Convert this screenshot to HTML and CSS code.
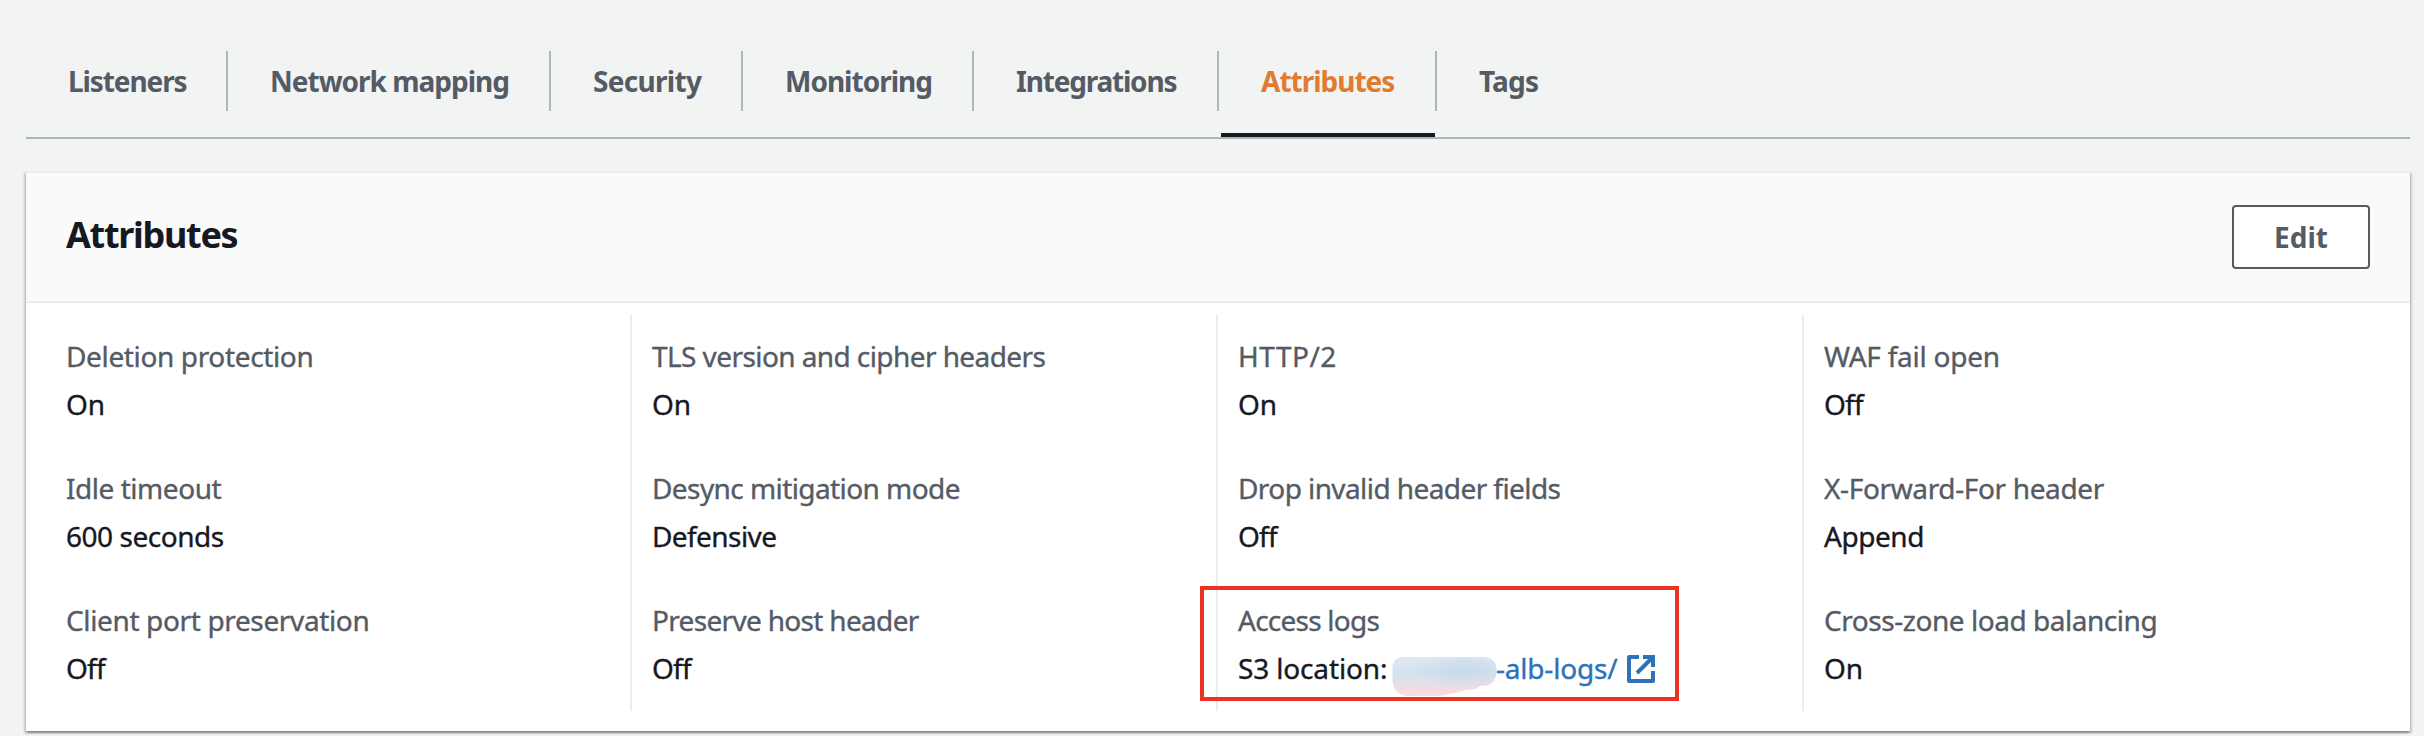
FILE: index.html
```html
<!DOCTYPE html>
<html lang="en">
<head>
<meta charset="utf-8">
<title>Load balancer attributes</title>
<link rel="stylesheet" href="styles.css">
</head>
<body>
<nav class="tabs">
  <a class="tab tab-listeners">Listeners</a>
  <a class="tab tab-network">Network mapping</a>
  <a class="tab tab-security">Security</a>
  <a class="tab tab-monitoring">Monitoring</a>
  <a class="tab tab-integrations">Integrations</a>
  <a class="tab tab-attributes active">Attributes</a>
  <a class="tab tab-tags">Tags</a>
</nav>
<section class="card">
  <header class="card-header">
    <h2 class="card-title">Attributes</h2>
    <button class="button">Edit</button>
  </header>
  <div class="columns">
    <div class="column">
      <div class="field"><div class="label track-3">Deletion protection</div><div class="value">On</div></div>
      <div class="field"><div class="label track-4">Idle timeout</div><div class="value track-4">600 seconds</div></div>
      <div class="field"><div class="label track-3">Client port preservation</div><div class="value track-7">Off</div></div>
    </div>
    <div class="column">
      <div class="field"><div class="label track-5">TLS version and cipher headers</div><div class="value">On</div></div>
      <div class="field"><div class="label track-5">Desync mitigation mode</div><div class="value track-5">Defensive</div></div>
      <div class="field"><div class="label track-6">Preserve host header</div><div class="value track-7">Off</div></div>
    </div>
    <div class="column">
      <div class="field"><div class="label track-wide">HTTP/2</div><div class="value">On</div></div>
      <div class="field"><div class="label track-5">Drop invalid header fields</div><div class="value track-7">Off</div></div>
      <div class="field highlighted">
        <div class="label track-7">Access logs</div>
        <div class="value location">
          <span class="location-name">S3 location:</span>
          <svg class="smudge" viewBox="0 0 105 39">
            <defs>
              <linearGradient id="wash" x1="0" y1="0" x2="0.1" y2="1">
                <stop offset="0" stop-color="#dfe9f2"/>
                <stop offset="0.45" stop-color="#d3e1ee"/>
                <stop offset="0.66" stop-color="#e2e0ea"/>
                <stop offset="0.86" stop-color="#f4dbe0"/>
                <stop offset="1" stop-color="#f8dde0"/>
              </linearGradient>
              <radialGradient id="tint" cx="0.68" cy="0.36" r="0.46">
                <stop offset="0" stop-color="#c8daec"/>
                <stop offset="1" stop-color="#c8daec" stop-opacity="0"/>
              </radialGradient>
            </defs>
            <path fill="url(#wash)" d="M9 0H94Q104.500 2 104.500 14Q104.500 25 96 28.500H90Q87 29 84 32Q79 33 74 33Q64 36 50 38.500Q47 39 42 39H14Q2 37 .5 24V9Q2 1 9 0Z"/>
            <path fill="url(#tint)" d="M9 0H94Q104.500 2 104.500 14Q104.500 25 96 28.500H90Q87 29 84 32Q79 33 74 33Q64 36 50 38.500Q47 39 42 39H14Q2 37 .5 24V9Q2 1 9 0Z"/>
          </svg>
          <a class="link">-alb-logs/</a>
          <svg class="external" viewBox="0 0 28 28" fill="none" stroke="currentColor" stroke-width="4">
            <path stroke-linejoin="round" d="M12 2H2V26H26V16"/>
            <path d="M16 2H26V12M10 18L26 2"/>
          </svg>
        </div>
      </div>
    </div>
    <div class="column">
      <div class="field"><div class="label track-2">WAF fail open</div><div class="value track-7">Off</div></div>
      <div class="field"><div class="label track-3">X-Forward-For header</div><div class="value track-4">Append</div></div>
      <div class="field"><div class="label track-4">Cross-zone load balancing</div><div class="value">On</div></div>
    </div>
  </div>
</section>
</body>
</html>
```
FILE: styles.css
```css
*, *::before, *::after { box-sizing: border-box; }

body {
  margin: 0;
  height: 736px;
  overflow: hidden;
  padding: 51px 14px 0 26px;
  background: #f2f3f3;
  color: #16191f;
  font: 28px/44px "Noto Sans", "Open Sans", sans-serif;
}

/* Tabs */
.tabs {
  display: flex;
  height: 88px;
  border-bottom: 2px solid #aab7b8;
}
.tab {
  position: relative;
  height: 60px;
  padding-left: 42px;
  border-right: 2px solid #aab7b8;
  color: #545b64;
  font-weight: 700;
  line-height: 60px;
  letter-spacing: -1px;
  white-space: nowrap;
}
.tab-listeners { width: 202px; letter-spacing: -1.1px; }
.tab-network { width: 323px; }
.tab-security { width: 192px; letter-spacing: -0.7px; }
.tab-monitoring { width: 231px; letter-spacing: -1px; }
.tab-integrations { width: 245px; letter-spacing: -1.2px; }
.tab-attributes { width: 218px; }
.tab-tags { border-right: 0; letter-spacing: -0.8px; }
.tab.active { color: #e07b30; }
.tab.active::after {
  content: "";
  position: absolute;
  left: 2px;
  right: 0;
  top: 82px;
  height: 4px;
  background: #16191f;
}

/* Card */
.card {
  height: 560px;
  margin-top: 32px;
  border-top: 2px solid #eaeded;
  background: #fff;
  box-shadow: 0 2px 2px rgba(0, 28, 36, .3), 2px 2px 2px rgba(0, 28, 36, .15), -2px 2px 2px rgba(0, 28, 36, .15);
}
.card-header {
  display: flex;
  justify-content: space-between;
  height: 130px;
  padding: 32px 40px 0;
  border-bottom: 2px solid #eaeded;
  background: #fafafa;
}
.card-title {
  margin: 5px 0 0;
  font-size: 36px;
  font-weight: 700;
  line-height: 50px;
  letter-spacing: -1.3px;
}
.button {
  width: 138px;
  height: 64px;
  padding: 0;
  border: 2px solid #545b64;
  border-radius: 4px;
  background: #fff;
  color: #545b64;
  font: 700 28px/60px "Noto Sans", "Open Sans", sans-serif;
}

/* Field grid */
.columns {
  display: grid;
  grid-template-columns: 604px 586px 586px 1fr;
  padding-top: 12px;
}
.column {
  padding-left: 20px;
  border-left: 2px solid #eaeded;
}
.column:first-child {
  padding-left: 40px;
  border-left: 0;
}
.field {
  position: relative;
  height: 132px;
  padding-top: 19px;
  white-space: nowrap;
  -webkit-text-stroke: .35px currentColor;
}
.label {
  margin-bottom: 4px;
  color: #545b64;
}
.track-wide { letter-spacing: .5px; }
.track-2 { letter-spacing: -.24px; }
.track-3 { letter-spacing: -.36px; }
.track-4 { letter-spacing: -.46px; }
.track-5 { letter-spacing: -.58px; }
.track-6 { letter-spacing: -.68px; }
.track-7 { letter-spacing: -.76px; }

/* Red frame drawn over the access log field */
.highlighted::after {
  content: "";
  position: absolute;
  left: -38px;
  top: 7px;
  width: 479px;
  height: 115px;
  border: 4px solid #eb3323;
}
.location {
  display: flex;
  align-items: flex-start;
}
.location-name {
  width: 154px;
  letter-spacing: -.15px;
}
.smudge {
  width: 105px;
  height: 39px;
  margin-top: 11px;
}
.link {
  width: 130px;
  margin-left: -1px;
  margin-right: 1px;
  color: #2e72b8;
  letter-spacing: -.2px;
}
.external {
  width: 28px;
  height: 28px;
  margin-top: 9px;
  color: #2e72b8;
}
```
